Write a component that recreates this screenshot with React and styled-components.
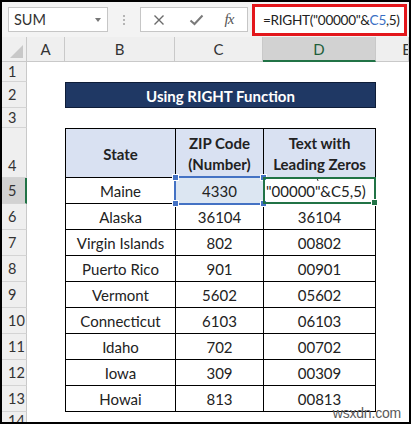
import React from "react";
import styled, { createGlobalStyle } from "styled-components";

const Global = createGlobalStyle`
  html, body { margin: 0; padding: 0; background: #fff; }
  body { font-family: "Lato", "Open Sans", sans-serif; }
  * { box-sizing: border-box; }
`;

const FONT = `"Lato", "Open Sans", sans-serif`;

const Frame = styled.div`
  width: 411px;
  height: 424px;
  border: 2px solid #000;
  background: #fff;
  position: relative;
  overflow: hidden;
  display: flex;
  flex-direction: column;
  font-family: ${FONT};
`;

const Toolbar = styled.div`
  height: 35px;
  flex: none;
  background: #f3f3f3;
  display: flex;
  align-items: center;
  padding: 0 2px 0 6px;
  & > * { flex-shrink: 0; }
`;

const NameBox = styled.div`
  width: 100px;
  height: 25px;
  background: #fff;
  border: 1px solid #c6c6c6;
  display: flex;
  align-items: center;
  justify-content: space-between;
  padding: 0 5px 0 5px;
  font-size: 14.5px;
  color: #333;
`;

const Caret = styled.span`
  width: 0;
  height: 0;
  border-left: 3.5px solid transparent;
  border-right: 3.5px solid transparent;
  border-top: 4px solid #777;
  margin-right: 1px;
`;

const Dots = styled.div`
  width: 32px;
  display: flex;
  flex-direction: column;
  align-items: center;
  gap: 2px;
  span {
    width: 2px;
    height: 2px;
    background: #b5b5b5;
  }
`;

const FxBox = styled.div`
  width: 108px;
  height: 25px;
  background: #fff;
  border: 1px solid #c6c6c6;
  display: grid;
  grid-template-columns: 36px 38px 1fr;
  align-items: center;
  justify-items: center;
`;

const FxText = styled.span`
  font-family: "Liberation Serif", "DejaVu Serif", serif;
  font-style: italic;
  font-size: 15px;
  color: #555;
  letter-spacing: -1px;
  margin-left: -4px;
`;

const FormulaBox = styled.div`
  && { flex: 1 1 auto; }
  min-width: 0;
  overflow: hidden;
  margin-left: 4px;
  height: 32px;
  background: #fff;
  border: 3px solid #e3161b;
  display: flex;
  align-items: center;
  padding-left: 8px;
  font-size: 13.6px;
  letter-spacing: -0.3px;
  color: #222;
  white-space: nowrap;
`;

const Ref = styled.span`
  color: #3a6fc4;
`;

const Sheet = styled.div`
  flex: 1;
  display: grid;
  grid-template-columns: 25px 38px 110px 88px 113px 1fr;
  grid-template-rows: 25px 20px 26px 20px 50px repeat(9, 26px) 1fr;
  font-family: ${FONT};
`;

const Corner = styled.div`
  grid-row: 1;
  grid-column: 1;
  background: #efefef;
  border-right: 1px solid #c9c9c9;
  border-bottom: 1px solid #c9c9c9;
  position: relative;
  &::after {
    content: "";
    position: absolute;
    right: 3px;
    bottom: 3px;
    width: 0;
    height: 0;
    border-left: 13px solid transparent;
    border-bottom: 13px solid #c8c8c8;
  }
`;

const ColHead = styled.div`
  grid-row: 1;
  grid-column: ${(p) => p.$col};
  background: ${(p) => (p.$active ? "#d2d2d2" : "#efefef")};
  border-right: 1px solid #c9c9c9;
  border-bottom: ${(p) => (p.$active ? "2px solid #217346" : "1px solid #c9c9c9")};
  display: flex;
  align-items: center;
  justify-content: ${(p) => (p.$clip ? "flex-end" : "center")};
  font-size: 15px;
  color: ${(p) => (p.$active ? "#1e5e3a" : "#333")};
  overflow: hidden;
  padding-top: ${(p) => (p.$active ? "1px" : "0")};
`;

const EChar = styled.span`
  margin-right: -3px;
`;

const RowHead = styled.div`
  grid-column: 1;
  grid-row: ${(p) => p.$row};
  background: ${(p) => (p.$active ? "#d2d2d2" : "#efefef")};
  border-bottom: 1px solid #d4d4d4;
  border-right: ${(p) => (p.$active ? "2px solid #217346" : "1px solid #c9c9c9")};
  display: flex;
  align-items: ${(p) => (p.$tall ? "flex-end" : "center")};
  padding-left: 6px;
  padding-bottom: ${(p) => (p.$tall ? "3px" : "0")};
  font-size: 14.5px;
  color: #333;
  overflow: hidden;
`;

const Title = styled.div`
  grid-row: 3;
  grid-column: 3 / 6;
  background: #1f3864;
  border: 1px solid #0e1d38;
  color: #fff;
  font-weight: 700;
  font-size: 15px;
  display: flex;
  align-items: center;
  justify-content: center;
  padding-top: 1px;
`;

const Table = styled.div`
  grid-row: 5 / 15;
  grid-column: 3 / 6;
  display: grid;
  grid-template-columns: 109px 87px 111px;
  grid-template-rows: 48px repeat(9, 25px);
  gap: 1px;
  padding: 1px;
  background: #000;
`;

const HeadCell = styled.div`
  background: #d9e1f2;
  font-weight: 700;
  font-size: 15px;
  line-height: 21px;
  color: #222;
  display: flex;
  align-items: center;
  justify-content: center;
  text-align: center;
  padding-top: 2px;
`;

const Cell = styled.div`
  position: relative;
  background: ${(p) => (p.$selected ? "#dce6f2" : "#fff")};
  font-size: 15px;
  color: #222;
  display: flex;
  align-items: center;
  justify-content: ${(p) => (p.$left ? "flex-start" : "center")};
  padding-left: ${(p) => (p.$left ? "2px" : "0")};
  padding-top: 1px;
  white-space: nowrap;
`;

const Outline = styled.div`
  position: absolute;
  left: ${(p) => p.$inset}px;
  top: ${(p) => p.$inset}px;
  right: ${(p) => p.$inset}px;
  bottom: ${(p) => p.$inset}px;
  border: 2px solid ${(p) => p.$color};
  pointer-events: none;
  z-index: 2;
`;

const Handle = styled.span`
  position: absolute;
  width: 5px;
  height: 5px;
  background: ${(p) => p.$color};
  border: 1px solid #fff;
  box-sizing: content-box;
  ${(p) => (p.$v === "top" ? "top: -4px;" : "bottom: -4px;")}
  ${(p) => (p.$h === "left" ? "left: -4px;" : "right: -4px;")}
`;

const Tick = styled.span`
  position: absolute;
  left: 53px;
  top: 0px;
  width: 1px;
  height: 3px;
  background: #333;
  transform: rotate(-25deg);
`;

const Watermark = styled.div`
  position: absolute;
  right: 8px;
  bottom: 1px;
  font-family: "Liberation Sans", Arial, sans-serif;
  font-size: 14px;
  color: #5a5a5a;
  letter-spacing: -0.2px;
  z-index: 5;
`;

const XIcon = () => (
  <svg width="12" height="12" viewBox="0 0 12 12">
    <path d="M1.5 1.5 L10.5 10.5 M10.5 1.5 L1.5 10.5" stroke="#6b6b6b" strokeWidth="1.4" fill="none" />
  </svg>
);

const CheckIcon = () => (
  <svg width="15" height="12" viewBox="0 0 15 12">
    <path d="M1.5 6.5 L5.5 10 L13.5 1.5" stroke="#7a7a7a" strokeWidth="2" fill="none" />
  </svg>
);

const rows = [
  ["Maine", "4330", null],
  ["Alaska", "36104", "36104"],
  ["Virgin Islands", "802", "00802"],
  ["Puerto Rico", "901", "00901"],
  ["Vermont", "5602", "05602"],
  ["Connecticut", "6103", "06103"],
  ["Idaho", "702", "00702"],
  ["Iowa", "309", "00309"],
  ["Howai", "813", "00813"],
];

const cols = ["A", "B", "C", "D", "E"];

export default function App() {
  return (
    <>
      <Global />
      <Frame>
        <Toolbar>
          <NameBox>
            SUM
            <Caret />
          </NameBox>
          <Dots>
            <span />
            <span />
            <span />
          </Dots>
          <FxBox>
            <XIcon />
            <CheckIcon />
            <FxText>fx</FxText>
          </FxBox>
          <FormulaBox>
            =RIGHT("00000"&amp;<Ref>C5</Ref>,5)
          </FormulaBox>
        </Toolbar>
        <Sheet>
          <Corner />
          {cols.map((c, i) => (
            <ColHead key={c} $col={i + 2} $active={c === "D"} $clip={c === "E"}>
              {c === "E" ? <EChar>E</EChar> : c}
            </ColHead>
          ))}
          {Array.from({ length: 14 }, (_, i) => (
            <RowHead key={i} $row={i + 2} $active={i + 1 === 5} $tall={i + 1 === 4 || i + 1 === 14}>
              {i + 1}
            </RowHead>
          ))}
          <Title>Using RIGHT Function</Title>
          <Table>
            <HeadCell>State</HeadCell>
            <HeadCell>
              ZIP Code
              <br />
              (Number)
            </HeadCell>
            <HeadCell>
              Text with
              <br />
              Leading Zeros
            </HeadCell>
            {rows.map(([s, z, t], i) => (
              <React.Fragment key={s}>
                <Cell>{s}</Cell>
                {i === 0 ? (
                  <Cell $selected>
                    {z}
                    <Outline $inset={-2} $color="#4472c4">
                      <Handle $color="#4472c4" $v="top" $h="left" />
                      <Handle $color="#4472c4" $v="top" $h="right" />
                      <Handle $color="#4472c4" $v="bottom" $h="left" />
                      <Handle $color="#4472c4" $v="bottom" $h="right" />
                    </Outline>
                  </Cell>
                ) : (
                  <Cell>{z}</Cell>
                )}
                {i === 0 ? (
                  <Cell $left>
                    <Tick />
                    "00000"&amp;C5,5)
                    <Outline $inset={-1} $color="#217346">
                      <Handle $color="#217346" $v="bottom" $h="right" />
                    </Outline>
                  </Cell>
                ) : (
                  <Cell>{t}</Cell>
                )}
              </React.Fragment>
            ))}
          </Table>
        </Sheet>
        <Watermark>wsxdn.com</Watermark>
      </Frame>
    </>
  );
}
